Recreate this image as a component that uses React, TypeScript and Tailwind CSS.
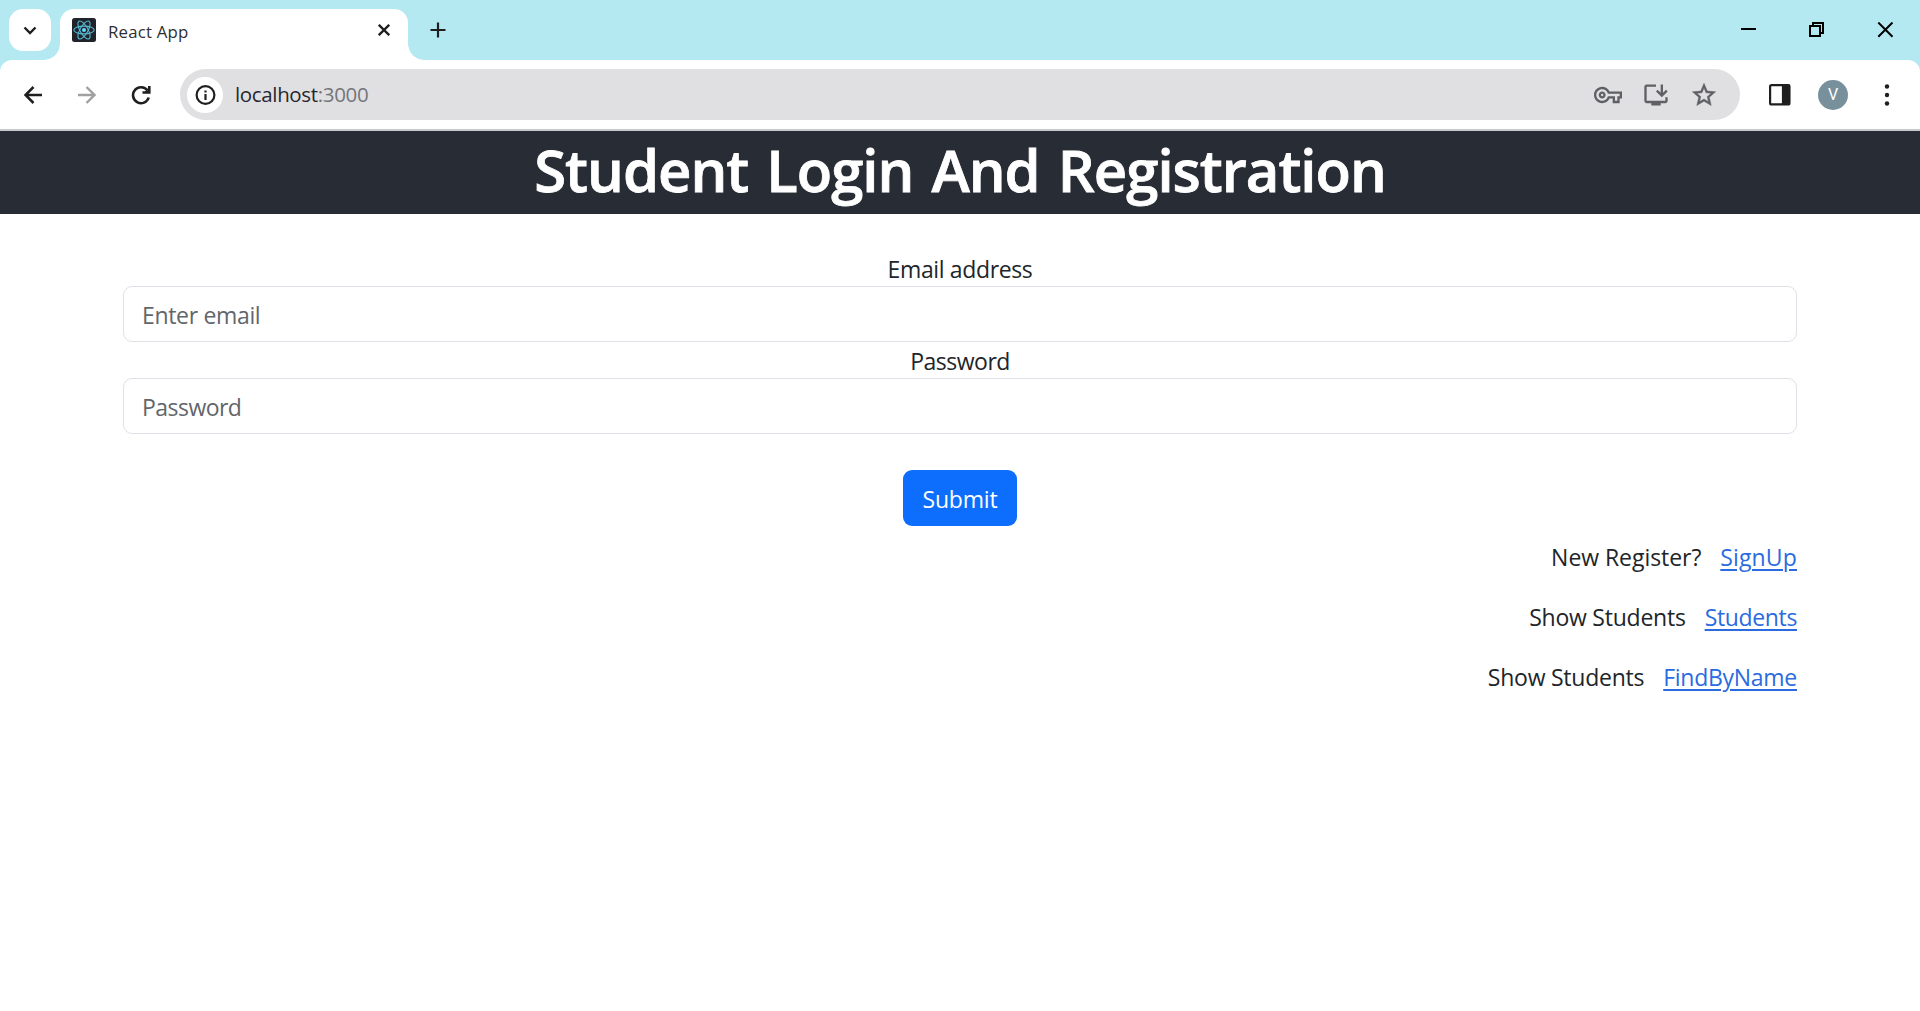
import React from "react";
import { MdOutlineInstallDesktop, MdOutlineVpnKey } from "react-icons/md";

const SANS = "font-['Open_Sans',sans-serif]";

function ReactLogo() {
  return (
    <svg width="24" height="24" viewBox="0 0 24 24" fill="none" className="shrink-0">
      <rect width="24" height="24" rx="2.5" fill="#20232a" />
      <g stroke="#57b9d3" strokeWidth="1.1">
        <ellipse cx="12" cy="12" rx="10.2" ry="3.9" />
        <ellipse cx="12" cy="12" rx="10.2" ry="3.9" transform="rotate(60 12 12)" />
        <ellipse cx="12" cy="12" rx="10.2" ry="3.9" transform="rotate(120 12 12)" />
      </g>
      <circle cx="12" cy="12" r="2" fill="#61dafb" />
    </svg>
  );
}

function TabStrip() {
  return (
    <div className="flex h-[60px] items-end bg-[#b5e9f2] pl-[9px]">
      <button className="mb-[9px] flex h-[42px] w-[42px] shrink-0 items-center justify-center rounded-[14px] bg-white">
        <svg width="14" height="14" viewBox="0 0 14 14" fill="none" stroke="#1f1f1f" strokeWidth="2.4">
          <path d="M1.5 4.500 7 10l5.500-5.500" />
        </svg>
      </button>
      <div className="-ml-[7px] h-4 w-4 shrink-0 bg-[radial-gradient(circle_at_0_0,transparent_15.500px,white_16px)]" />
      <div className="flex h-[51px] w-[348px] shrink-0 items-start rounded-t-[14px] bg-white pl-3 pt-[9px]">
        <ReactLogo />
        <span className="ml-3 mt-px text-[16.800px] leading-[25px] tracking-[0.2px] text-[#2e2e2e]">React App</span>
        <svg className="ml-auto mr-[18px] mt-[6px]" width="12" height="12" viewBox="0 0 12 12" stroke="#1f1f1f" strokeWidth="2.3">
          <path d="M.8.8 11.200 11.200M11.200.8.8 11.200" />
        </svg>
      </div>
      <div className="h-4 w-4 shrink-0 bg-[radial-gradient(circle_at_100%_0,transparent_15.500px,white_16px)]" />
      <svg className="mb-[22px] ml-[6px]" width="16" height="16" viewBox="0 0 16 16" stroke="#1f1f1f" strokeWidth="2.2">
        <path d="M8 .5v15M.5 8h15" />
      </svg>
      <div className="mb-[22px] ml-auto mr-[26px] flex h-4 items-center gap-[52px]">
        <svg width="16" height="16" viewBox="0 0 16 16"><path d="M0 6h15v2H0z" /></svg>
        <svg width="16" height="16" viewBox="0 0 16 16" fill="none" stroke="#000" strokeWidth="2">
          <path d="M1 4h10v10H1zM4 4V1h10v10h-3" />
        </svg>
        <svg width="17" height="16" viewBox="0 0 17 16" stroke="#000" strokeWidth="2"><path d="m1.300.5 14.200 14.200M15.500.5 1.300 14.700" /></svg>
      </div>
    </div>
  );
}

function Toolbar() {
  return (
    <div className="bg-[#b5e9f2]">
      <div className="flex h-[71px] items-center rounded-t-[12px] border-b-2 border-[#c7c9cc] bg-white pl-6">
        <svg width="18" height="18" viewBox="0 0 18 18" fill="none" stroke="#1f1f1f" strokeWidth="2.500">
          <path d="M18 9H2M9.500 1 1.500 9l8 8" />
        </svg>
        <svg className="ml-9" width="18" height="18" viewBox="0 0 18 18" fill="none" stroke="#a0a0a0" strokeWidth="2.400">
          <path d="M0 9h16M8.500 1l8 8-8 8" />
        </svg>
        <svg className="ml-[35px]" width="20" height="20" viewBox="0 0 20 20" fill="none" stroke="#1f1f1f" strokeWidth="2.600">
          <path d="M16.500 5.500A8 8 0 1 0 17.700 12.500M18.300 1v6.500h-6.800M18 3.500v3.700h-3.700" />
        </svg>
        <div className="ml-[29px] flex h-[51px] w-[1560px] shrink-0 items-center rounded-full bg-[#e0e0e3] pl-[7px]">
          <div className="flex h-9 w-9 items-center justify-center rounded-full bg-white">
            <svg width="20" height="20" viewBox="0 0 20 20" fill="none" stroke="#1f1f1f" strokeWidth="2.200" className="overflow-visible">
              <circle cx="10.500" cy="10" r="8.900" />
              <path d="M10.500 9v6M10.500 5.500v2" />
            </svg>
          </div>
          <span className="mb-0.5 ml-3 text-[20.500px] leading-7 tracking-[-0.35px] text-[#27272f]">
            localhost<span className="text-[#75757a]">:3000</span>
          </span>
          <div className="ml-auto mr-[22px] flex items-center gap-5 text-[#5f6063]">
            <MdOutlineVpnKey size={28} />
            <MdOutlineInstallDesktop size={28} />
            <svg width="28" height="28" viewBox="0 0 24 24" fill="currentColor" stroke="currentColor" strokeWidth="0.4">
              <path d="m22 9.240-7.190-.62L12 2 9.190 8.630 2 9.240l5.460 4.730L5.820 21 12 17.270 18.180 21l-1.630-7.030L22 9.240zM12 15.400l-3.760 2.270 1-4.280-3.320-2.880 4.380-.38L12 6.100l1.710 4.040 4.380.38-3.320 2.880 1 4.280L12 15.400z" />
            </svg>
          </div>
        </div>
        <svg className="ml-[29px] shrink-0" width="22" height="22" viewBox="0 0 22 22" fill="none" stroke="#1f1f1f" strokeWidth="2.200">
          <rect x="1.100" y="1.100" width="19.300" height="19.300" rx="1.500" />
          <path d="M14 1.500h6v18.500h-6z" fill="#1f1f1f" />
        </svg>
        <div className="ml-[27px] flex h-[30px] w-[30px] shrink-0 items-center justify-center rounded-full bg-[#78909c] pt-px font-[Roboto] text-[16px] leading-none text-white">V</div>
        <svg className="ml-[36px] shrink-0" width="6" height="22" viewBox="0 0 6 22" fill="#1f1f1f">
          <circle cx="3" cy="2.500" r="2.200" />
          <circle cx="3" cy="11" r="2.200" />
          <circle cx="3" cy="19.500" r="2.200" />
        </svg>
      </div>
    </div>
  );
}

const INPUT =
  "block h-14 w-full rounded-[9px] border border-[#dee2e6] bg-white px-[18px] pt-px text-[23px] placeholder:text-[#62666a] placeholder:opacity-100";

const LINKS = [
  { text: "New Register?", textTrack: "tracking-[-0.05px]", link: "SignUp", linkTrack: "tracking-[0.14px]" },
  { text: "Show Students", textTrack: "tracking-[-0.24px]", link: "Students", linkTrack: "tracking-[-0.35px]" },
  { text: "Show Students", textTrack: "tracking-[-0.24px]", link: "FindByName", linkTrack: "tracking-[-0.28px]" },
];

export default function App() {
  return (
    <div className={`${SANS} h-[1011px] w-[1920px] overflow-hidden bg-white text-[#212529]`}>
      <TabStrip />
      <Toolbar />
      <header className="flex h-[83px] items-start justify-center bg-[#282c34]">
        <h1 className="text-[58px] font-semibold leading-[78px] tracking-[-1px] text-white [-webkit-text-stroke:0.8px_white] [word-spacing:4px]">
          Student Login And Registration
        </h1>
      </header>
      <main className="px-[123px] pt-9 text-[23px] leading-[34px]">
        <form>
          <label className="block pt-0.5 text-center tracking-[-0.37px]">Email address</label>
          <input className={`${INPUT} tracking-[-0.33px]`} placeholder="Enter email" />
          <label className="block pt-0.5 text-center tracking-[-0.49px]">Password</label>
          <input className={`${INPUT} tracking-[-0.54px]`} placeholder="Password" />
          <button type="button" className="mx-auto mt-9 block h-14 w-[114px] rounded-[9px] bg-[#0d6efd] pt-0.5 tracking-[-0.18px] text-white">
            Submit
          </button>
        </form>
        <div className="mt-3 flex flex-col gap-6">
          {LINKS.map((row) => (
            <p key={row.link} className="flex justify-end gap-[19px] pt-0.5">
              <span className={row.textTrack}>{row.text}</span>
              <a className={`text-[#2a6be0] underline decoration-2 underline-offset-[3px] ${row.linkTrack}`}>{row.link}</a>
            </p>
          ))}
        </div>
      </main>
    </div>
  );
}
